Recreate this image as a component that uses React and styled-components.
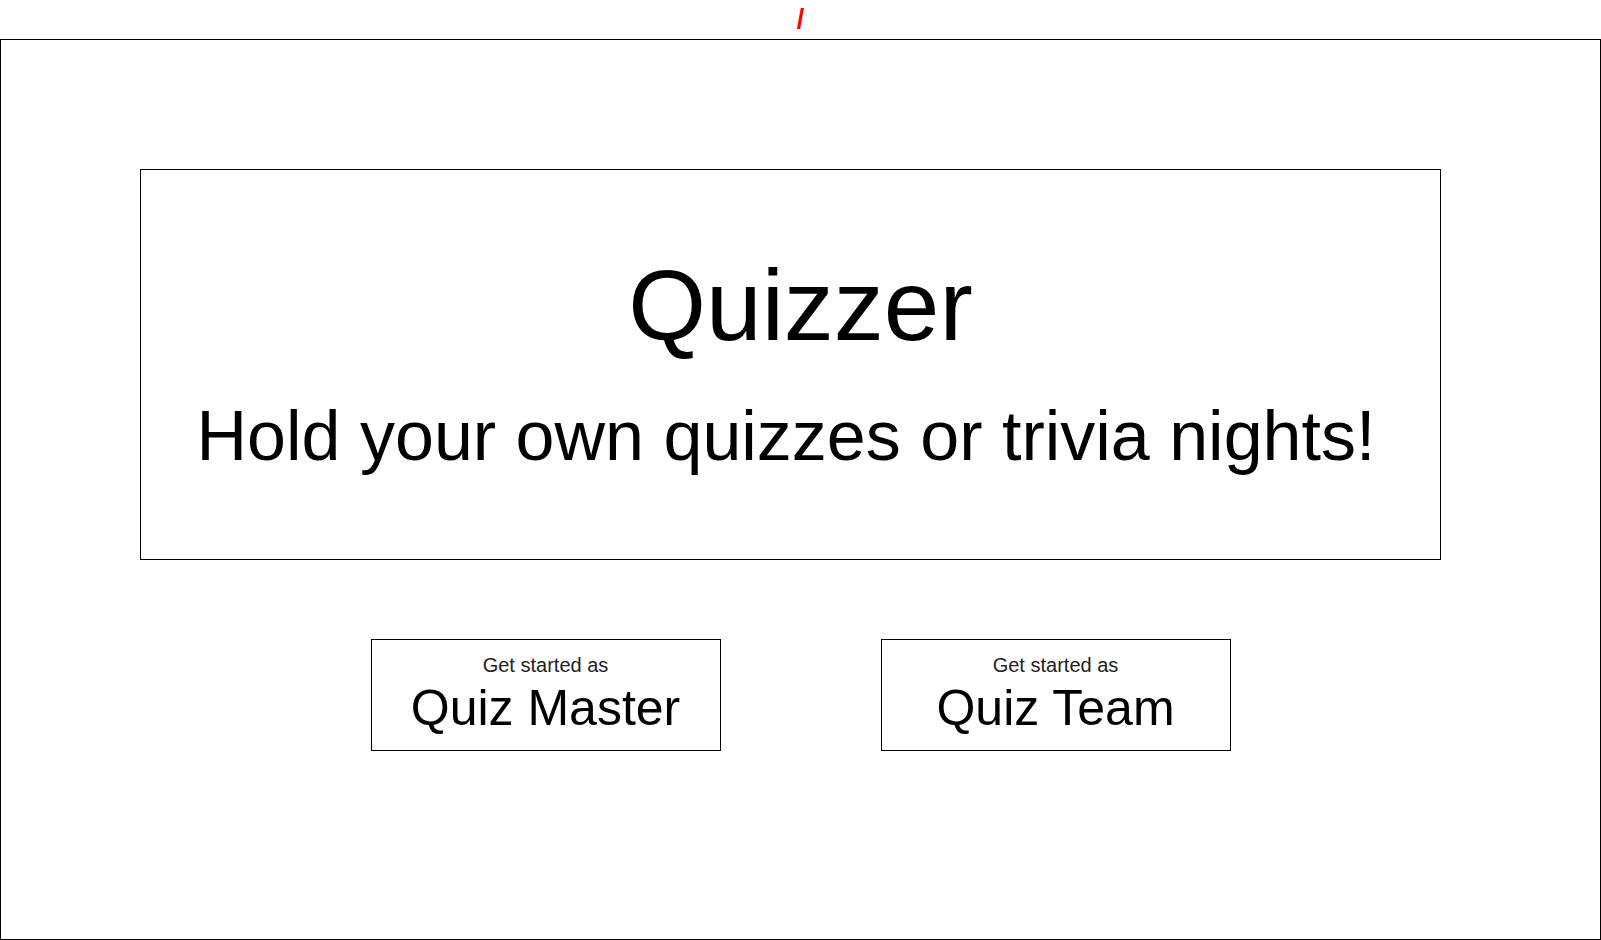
import React from 'react';
import styled, { createGlobalStyle } from 'styled-components';

const GlobalStyle = createGlobalStyle`
    html, body {
        margin: 0;
        padding: 0;
        background: #fff;
    }
    body {
        font-family: "Liberation Sans", Arial, sans-serif;
        color: #000;
    }
`

const RouteBar = styled.div`
    height: 39px;
    line-height: 38px;
    text-align: center;
    color: red;
    font-size: 27px;
    font-weight: bold;
`
const Page = styled.main`
    box-sizing: border-box;
    width: 100%;
    height: 901px;
    border: 1px solid #000;
    display: flex;
    flex-direction: column;
`
const Hero = styled.section`
    box-sizing: border-box;
    width: 1301px;
    height: 391px;
    margin: 129px 0 0 139px;
    padding-top: 85px;
    border: 1px solid #000;
    display: flex;
    flex-direction: column;
    align-items: center;
`
const Title = styled.h1`
    margin: 0;
    padding-left: 20px;
    font-size: 100px;
    font-weight: normal;
    line-height: 1;
`
const Subtitle = styled.h2`
    margin: 46px 0 0;
    padding-right: 9px;
    font-size: 70px;
    font-weight: normal;
    line-height: 1;
`
const Actions = styled.div`
    display: flex;
    justify-content: center;
    gap: 160px;
    margin-top: 79px;
`
const StartButton = styled.button`
    box-sizing: border-box;
    width: 350px;
    height: 112px;
    padding: 15px 0 0;
    border: 1px solid #000;
    background: #fff;
    font-family: inherit;
    color: #000;
    display: flex;
    flex-direction: column;
    align-items: center;
    cursor: pointer;
`
const Lead = styled.span`
    font-size: 20px;
    line-height: 1;
    color: #222;
`
const Role = styled.span`
    margin-top: 8px;
    font-size: 50px;
    line-height: 1;
`

const roles = ['Quiz Master', 'Quiz Team'];

const App = () => {
    return (
        <>
            <GlobalStyle />
            <RouteBar>/</RouteBar>
            <Page>
                <Hero>
                    <Title>Quizzer</Title>
                    <Subtitle>Hold your own quizzes or trivia nights!</Subtitle>
                </Hero>
                <Actions>
                    {roles.map(role => (
                        <StartButton key={role}>
                            <Lead>Get started as</Lead>
                            <Role>{role}</Role>
                        </StartButton>
                    ))}
                </Actions>
            </Page>
        </>
    )
}

export default App;
